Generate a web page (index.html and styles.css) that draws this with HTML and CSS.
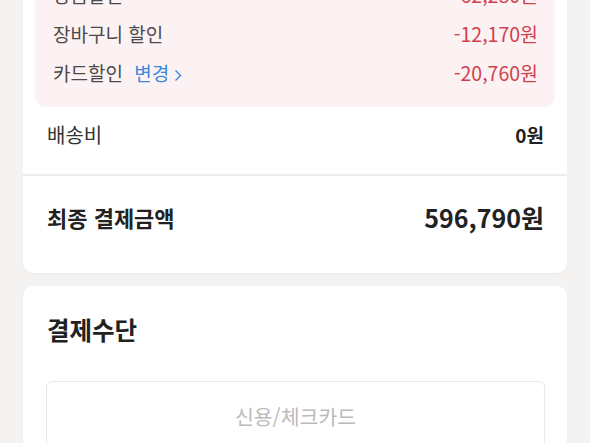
FILE: index.html
```html
<!DOCTYPE html>
<html lang="ko">
<head>
    <meta charset="UTF-8">
    <meta name="viewport" content="width=device-width, initial-scale=1.0">
    <title>주문/결제</title>
    <link rel="stylesheet" href="styles.css">
</head>
<body>

<div id="page">

    <!-- 결제금액 요약 -->
    <div class="card summary-card">
        <div class="discount-box">
            <div class="row">
                <span class="label">상품할인</span>
                <span class="minus">-62,280원</span>
            </div>
            <div class="row">
                <span class="label">장바구니 할인</span>
                <span class="minus">-12,170원</span>
            </div>
            <div class="row">
                <span class="label">카드할인 <a class="change-link" href="#">변경<svg class="chev" width="8" height="13" viewBox="0 0 8 13"><path d="M1.5 1.5 L6.5 6.5 L1.5 11.5" fill="none" stroke="#3a87dc" stroke-width="1.4"/></svg></a></span>
                <span class="minus">-20,760원</span>
            </div>
        </div>

        <div class="row shipping">
            <span>배송비</span>
            <span class="strong">0원</span>
        </div>

        <div class="row total">
            <span class="total-label">최종 결제금액</span>
            <span class="total-price">596,790원</span>
        </div>
    </div>

    <!-- 결제수단 -->
    <div class="card pay-card">
        <h2 class="section-title">결제수단</h2>
        <div class="pay-select">신용/체크카드</div>
    </div>

</div>

</body>
</html>
```

FILE: styles.css
```css
body {
    margin: 0;
    background-color: #f4f3f1;
    font-family: "Noto Sans CJK KR", "Noto Sans", sans-serif;
    color: #222;
}

#page {
    padding: 0 23px;
    margin-top: -50px;
}

.card {
    background-color: #fff;
    border-radius: 10px;
    margin-bottom: 13px;
    box-shadow: 0 1px 3px rgba(0, 0, 0, 0.04);
}

.summary-card {
    padding-top: 12px;
}

.discount-box {
    margin: 0 12px;
    padding: 20px 17px 21px 18px;
    background-color: #fdf2f3;
    border-radius: 10px;
    display: flex;
    flex-direction: column;
    gap: 13px;
}

.row {
    display: flex;
    justify-content: space-between;
    align-items: center;
    font-size: 19px;
    line-height: 26px;
}

.label {
    color: #4a4a4a;
}

.minus {
    color: #d2404f;
    font-size: 19.5px;
}

.change-link {
    color: #3a87dc;
    text-decoration: none;
    margin-left: 6px;
}

.chev {
    margin-left: 5px;
    vertical-align: -1px;
}

.shipping {
    padding: 15px 23px 26px 24px;
    font-size: 20px;
    color: #333;
    border-bottom: 2px solid #ececec;
}

.strong {
    font-weight: 700;
    font-size: 19px;
    color: #222;
}

.total {
    padding: 22px 23px 37px 24px;
    line-height: 38px;
}

.total-label {
    font-size: 22px;
    font-weight: 700;
}

.total-price {
    font-size: 25px;
    font-weight: 700;
}

.pay-card {
    padding: 28px 22px 0 23px;
}

.section-title {
    margin: 0 0 35px 1px;
    font-size: 24.5px;
    line-height: 32px;
    font-weight: 700;
}

.pay-select {
    border: 1px solid #e8e8e8;
    border-radius: 6px;
    height: 68px;
    line-height: 68px;
    text-align: center;
    font-size: 20.5px;
    color: #bbb;
}
```
